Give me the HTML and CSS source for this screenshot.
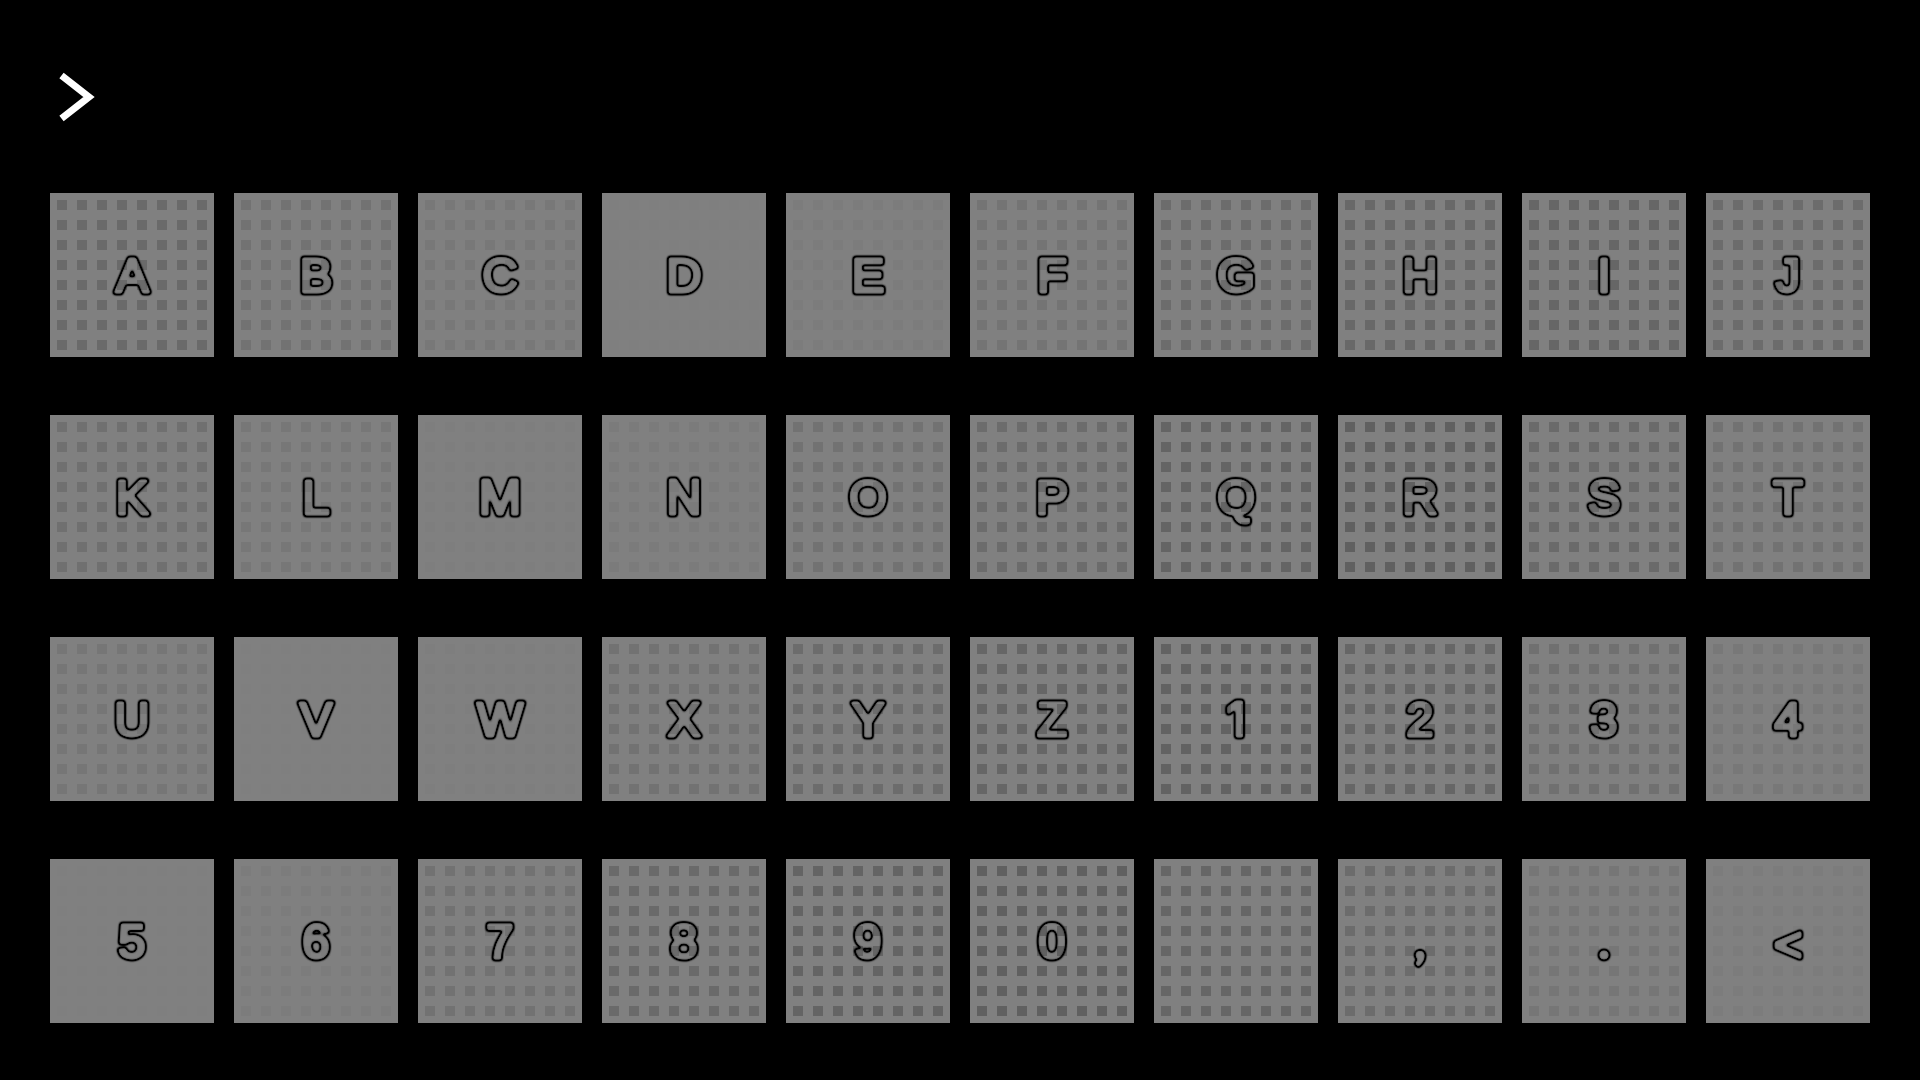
FILE: index.html
```html
<!doctype html>
<html lang="en-us">
<head>
<title>Keyboard</title>
<meta http-equiv="Content-Type" content="text/html; charset=utf-8">
<link rel="stylesheet" href="styles.css">
</head>
<body>

<svg class="defs" width="0" height="0" aria-hidden="true">
  <filter id="hollow" x="0" y="0" width="100%" height="100%" color-interpolation-filters="sRGB">
    <feGaussianBlur in="SourceAlpha" stdDeviation="1.2"/>
    <feComponentTransfer>
      <feFuncA type="table" tableValues="0 .5 1 1 1 .3 0"/>
    </feComponentTransfer>
  </filter>
</svg>

<div id="prompt">
  <svg width="50" height="60" viewBox="0 0 50 60"><path d="M6.5 8.5 L34 30 L6.5 51.5" fill="none" stroke="#fff" stroke-width="7"/></svg>
</div>

<div id="keys">
  <div class="key" style="--dot:#6a6a6a"><svg class="cap" viewBox="0 0 80 80"><text x="40" y="57">A</text></svg></div>
  <div class="key" style="--dot:#727272"><svg class="cap" viewBox="0 0 80 80"><text x="40" y="57">B</text></svg></div>
  <div class="key" style="--dot:#787878"><svg class="cap" viewBox="0 0 80 80"><text x="40" y="57">C</text></svg></div>
  <div class="key" style="--dot:#7f7f7f"><svg class="cap" viewBox="0 0 80 80"><text x="40" y="57">D</text></svg></div>
  <div class="key" style="--dot:#7c7c7c"><svg class="cap" viewBox="0 0 80 80"><text x="40" y="57">E</text></svg></div>
  <div class="key" style="--dot:#747474"><svg class="cap" viewBox="0 0 80 80"><text x="40" y="57">F</text></svg></div>
  <div class="key" style="--dot:#6c6c6c"><svg class="cap" viewBox="0 0 80 80"><text x="40" y="57">G</text></svg></div>
  <div class="key" style="--dot:#686868"><svg class="cap" viewBox="0 0 80 80"><text x="40" y="57">H</text></svg></div>
  <div class="key" style="--dot:#666"><svg class="cap" viewBox="0 0 80 80"><text x="40" y="57">I</text></svg></div>
  <div class="key" style="--dot:#6c6c6c"><svg class="cap" viewBox="0 0 80 80"><text x="40" y="57">J</text></svg></div>

  <div class="key" style="--dot:#707070"><svg class="cap" viewBox="0 0 80 80"><text x="40" y="57">K</text></svg></div>
  <div class="key" style="--dot:#777"><svg class="cap" viewBox="0 0 80 80"><text x="40" y="57">L</text></svg></div>
  <div class="key" style="--dot:#7e7e7e"><svg class="cap" viewBox="0 0 80 80"><text class="inter" x="40" y="57">M</text></svg></div>
  <div class="key" style="--dot:#7b7b7b"><svg class="cap" viewBox="0 0 80 80"><text class="inter" x="40" y="57">N</text></svg></div>
  <div class="key" style="--dot:#727272"><svg class="cap" viewBox="0 0 80 80"><text x="40" y="57">O</text></svg></div>
  <div class="key" style="--dot:#6c6c6c"><svg class="cap" viewBox="0 0 80 80"><text x="40" y="57">P</text></svg></div>
  <div class="key" style="--dot:#646464"><svg class="cap" viewBox="0 0 80 80"><text x="40" y="57">Q</text></svg></div>
  <div class="key" style="--dot:#606060"><svg class="cap" viewBox="0 0 80 80"><text x="40" y="57">R</text></svg></div>
  <div class="key" style="--dot:#6a6a6a"><svg class="cap" viewBox="0 0 80 80"><text x="40" y="57">S</text></svg></div>
  <div class="key" style="--dot:#727272"><svg class="cap" viewBox="0 0 80 80"><text x="40" y="57">T</text></svg></div>

  <div class="key" style="--dot:#767676"><svg class="cap" viewBox="0 0 80 80"><text x="40" y="57">U</text></svg></div>
  <div class="key" style="--dot:#7f7f7f"><svg class="cap" viewBox="0 0 80 80"><text x="40" y="57">V</text></svg></div>
  <div class="key" style="--dot:#7e7e7e"><svg class="cap" viewBox="0 0 80 80"><text x="40" y="57">W</text></svg></div>
  <div class="key" style="--dot:#727272"><svg class="cap" viewBox="0 0 80 80"><text x="40" y="57">X</text></svg></div>
  <div class="key" style="--dot:#6c6c6c"><svg class="cap" viewBox="0 0 80 80"><text x="40" y="57">Y</text></svg></div>
  <div class="key" style="--dot:#666"><svg class="cap" viewBox="0 0 80 80"><text x="40" y="57">Z</text></svg></div>
  <div class="key" style="--dot:#626262"><svg class="cap" viewBox="0 0 80 80"><text class="inter" x="40" y="57">1</text></svg></div>
  <div class="key" style="--dot:#666"><svg class="cap" viewBox="0 0 80 80"><text x="40" y="57">2</text></svg></div>
  <div class="key" style="--dot:#707070"><svg class="cap" viewBox="0 0 80 80"><text x="40" y="57">3</text></svg></div>
  <div class="key" style="--dot:#787878"><svg class="cap" viewBox="0 0 80 80"><text x="40" y="57">4</text></svg></div>

  <div class="key" style="--dot:#7f7f7f"><svg class="cap" viewBox="0 0 80 80"><text x="40" y="57">5</text></svg></div>
  <div class="key" style="--dot:#7c7c7c"><svg class="cap" viewBox="0 0 80 80"><text x="40" y="57">6</text></svg></div>
  <div class="key" style="--dot:#727272"><svg class="cap" viewBox="0 0 80 80"><text x="40" y="57">7</text></svg></div>
  <div class="key" style="--dot:#6a6a6a"><svg class="cap" viewBox="0 0 80 80"><text x="40" y="57">8</text></svg></div>
  <div class="key" style="--dot:#646464"><svg class="cap" viewBox="0 0 80 80"><text x="40" y="57">9</text></svg></div>
  <div class="key" style="--dot:#606060"><svg class="cap" viewBox="0 0 80 80"><text x="40" y="57">0</text></svg></div>
  <div class="key" style="--dot:#666"></div>
  <div class="key" style="--dot:#6c6c6c"><svg class="cap" viewBox="0 0 80 80"><text class="lato" x="40" y="57">,</text></svg></div>
  <div class="key" style="--dot:#767676"><svg class="cap" viewBox="0 0 80 80"><text class="lato" x="40" y="57">.</text></svg></div>
  <div class="key" style="--dot:#7c7c7c"><svg class="cap" viewBox="0 0 80 80"><text x="40" y="60">&lt;</text></svg></div>
</div>

</body>
</html>
```

FILE: styles.css
```css
BODY {
  margin: 0;
  height: 1080px;
  overflow: hidden;
  background: #000;
}
.defs {
  display: block;
  height: 0;
}
#prompt {
  height: 193px;
  padding-left: 55px;
  box-sizing: border-box;
  padding-top: 67px;
}
#prompt SVG {
  display: block;
}
#keys {
  display: grid;
  grid-template-columns: repeat(10, 164px);
  grid-auto-rows: 164px;
  column-gap: 20px;
  row-gap: 58px;
  padding-left: 50px;
}
.key {
  display: flex;
  align-items: center;
  justify-content: center;
  background-color: #808080;
  background-image: conic-gradient(at 10px 10px, transparent 75%, var(--dot) 0);
  background-size: 20px 20px;
  background-position: 7px 7px;
}
.cap {
  display: block;
  width: 80px;
  height: 80px;
  filter: url(#hollow);
}
.cap TEXT {
  font: 49px "Liberation Sans", Arial, sans-serif;
  text-anchor: middle;
  fill: #000;
  stroke: #000;
  stroke-width: 5px;
  stroke-linejoin: round;
  stroke-linecap: round;
}
.cap .inter {
  font: 47px Inter, "Liberation Sans", sans-serif;
}
.cap .lato {
  font-family: Lato, "Liberation Sans", sans-serif;
}
```
